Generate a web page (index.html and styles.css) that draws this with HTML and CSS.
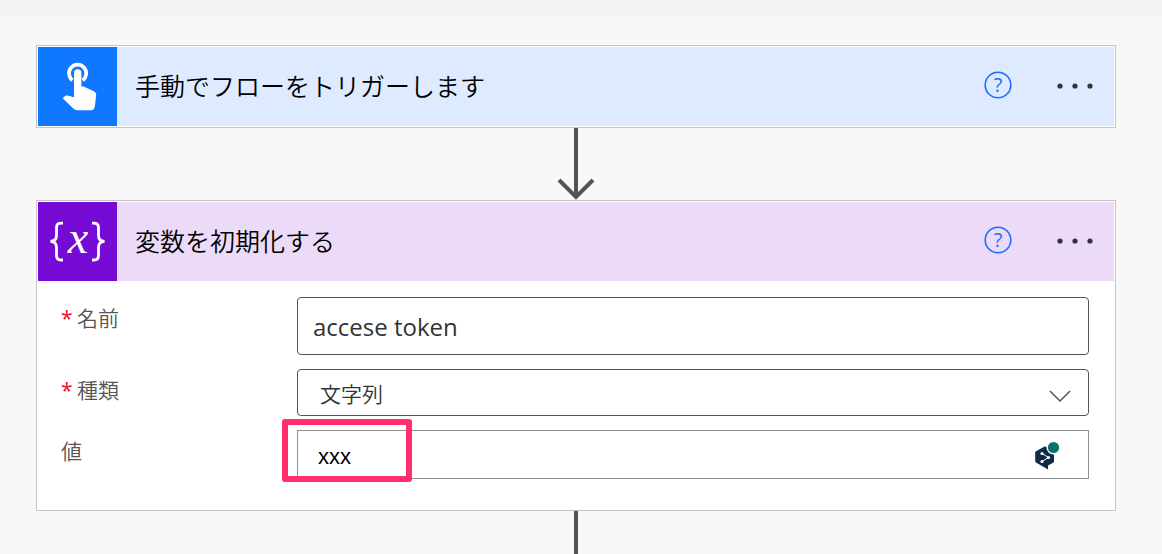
FILE: index.html
```html
<!DOCTYPE html>
<html lang="ja">
<head>
<meta charset="utf-8">
<meta name="viewport" content="width=device-width, initial-scale=1">
<title>フロー</title>
<link rel="stylesheet" href="styles.css">
</head>
<body>
<div class="topbar"></div>
<main class="flow">
  <section class="card">
    <header class="card-header trigger">
      <span class="card-icon">
        <svg width="79" height="79" viewBox="0 0 79 79" aria-hidden="true">
          <path d="M34.500 33.200A8.600 8.600 0 1 1 44.700 33.200" fill="none" stroke="#fff" stroke-width="3.700"/>
          <path d="M36 26a3.700 3.700 0 0 1 7.400 0V39.500h2.300L56.300 44.500Q58.500 45.600 58.200 48L56.800 59.500Q56.300 63.200 52.800 63.200H39Q37 63.200 35.600 61.800L24.700 51.200L26.700 49.300Q27.700 48.300 29.300 48.600L36 50.200Z" fill="#fff"/>
        </svg>
      </span>
      <h2 class="card-title">手動でフローをトリガーします</h2>
      <button class="icon-button help" type="button" aria-label="ヘルプ">
        <svg width="28" height="28" viewBox="0 0 28 28"><circle cx="14" cy="14" r="12.800"/><text x="14" y="21">?</text></svg>
      </button>
      <button class="icon-button more" type="button" aria-label="メニュー">
        <svg width="36" height="8" viewBox="0 0 36 8"><circle cx="3" cy="4" r="2.600"/><circle cx="18" cy="4" r="2.600"/><circle cx="33" cy="4" r="2.600"/></svg>
      </button>
    </header>
  </section>

  <div class="connector">
    <svg width="40" height="72" viewBox="0 0 40 72" aria-hidden="true"><path d="M20 0V69M3 52L20 69L37 52"/></svg>
  </div>

  <section class="card">
    <header class="card-header variable">
      <span class="card-icon">
        <svg width="79" height="79" viewBox="0 0 79 79" aria-hidden="true">
          <path d="M25 21.200H23Q18.500 21.200 18.500 25.700V33.500Q18.500 39 12.500 39.400Q18.500 39.800 18.500 45.300V53.500Q18.500 58 23 58H25M54 21.200H56Q60.500 21.200 60.500 25.700V33.500Q60.500 39 66.500 39.400Q60.500 39.800 60.500 45.300V53.500Q60.500 58 56 58H54" fill="none" stroke="#fff" stroke-width="2.800"/>
          <text class="glyph-x" x="40" y="51">x</text>
        </svg>
      </span>
      <h2 class="card-title">変数を初期化する</h2>
      <button class="icon-button help" type="button" aria-label="ヘルプ">
        <svg width="28" height="28" viewBox="0 0 28 28"><circle cx="14" cy="14" r="12.800"/><text x="14" y="21">?</text></svg>
      </button>
      <button class="icon-button more" type="button" aria-label="メニュー">
        <svg width="36" height="8" viewBox="0 0 36 8"><circle cx="3" cy="4" r="2.600"/><circle cx="18" cy="4" r="2.600"/><circle cx="33" cy="4" r="2.600"/></svg>
      </button>
    </header>
    <form class="fields">
      <div class="field">
        <label class="label" for="name"><span class="required">*</span>名前</label>
        <div class="control"><input class="box name" id="name" type="text" value="accese token"></div>
      </div>
      <div class="field">
        <label class="label" for="type"><span class="required">*</span>種類</label>
        <div class="control">
          <select class="box type" id="type"><option>文字列</option></select>
          <svg class="chevron" width="22" height="12" viewBox="0 0 22 12" aria-hidden="true"><path d="M1 1L11 11L21 1"/></svg>
        </div>
      </div>
      <div class="field">
        <label class="label" for="value">値</label>
        <div class="control">
          <input class="box value" id="value" type="text" value="xxx">
          <svg class="badge" width="26" height="30" viewBox="0 0 26 30" aria-hidden="true">
            <path d="M10.500 5.500Q11 5.300 11.500 5.500L19.500 10Q20 10.400 20 11V20.500Q20 21.200 19.500 21.500L14 24.500V28.500L2 21.500Q1.200 21 1.200 20.300V11.300Q1.200 10.600 2 10.200Z" fill="#0f2b46"/>
            <path d="M8 12.500L14.500 16.500L8 20.500" fill="none" stroke="#fff" stroke-width="1"/>
            <circle cx="8" cy="12.500" r="1.600" fill="#fff"/><circle cx="14.500" cy="16.500" r="1.600" fill="#fff"/><circle cx="8" cy="20.500" r="1.600" fill="#fff"/>
            <circle cx="19.500" cy="6.500" r="7" fill="#fff"/>
            <circle cx="19.500" cy="6.500" r="5.600" fill="#04736f"/>
          </svg>
          <span class="highlight"></span>
        </div>
      </div>
    </form>
  </section>

  <div class="connector tail"></div>
</main>
</body>
</html>
```
FILE: styles.css
```css
* {
  box-sizing: border-box;
}

body {
  margin: 0;
  min-height: 100vh;
  display: flex;
  flex-direction: column;
  background: #f8f8f8;
  font-family: "Noto Sans", "Noto Sans CJK JP", sans-serif;
  color: #000;
}

.topbar {
  height: 16px;
  background: #f3f3f3;
}

.flow {
  flex: 1;
  display: flex;
  flex-direction: column;
  padding: 29px 46px 0 36px;
}

.card {
  background: #fff;
  border: 1px solid #c4c4c4;
  padding: 1px;
}

.card-header {
  display: flex;
  align-items: center;
  padding-right: 21px;
}

.trigger {
  background: #deeaff;
}

.variable {
  background: #ebdbf8;
}

.card-icon {
  display: flex;
  margin-right: 18px;
}

.trigger .card-icon {
  background: #1077ff;
}

.variable .card-icon {
  background: #770bd6;
}

.glyph-x {
  font: italic 46px "Liberation Serif", serif;
  fill: #fff;
  text-anchor: middle;
}

.card-title {
  flex: 1;
  margin: 0;
  padding-bottom: 4px;
  font-family: "Noto Sans CJK JP", sans-serif;
  font-size: 25px;
  font-weight: 350;
  line-height: 36px;
}

.icon-button {
  display: flex;
  padding: 0;
  border: 0;
  background: none;
}

.help {
  margin: 0 45px 4px 0;
}

.help svg {
  overflow: visible;
}

.help circle {
  fill: none;
  stroke: #1a6dff;
  stroke-width: 1.600;
}

.help text {
  font: 20px "Open Sans", sans-serif;
  fill: #1a6dff;
  text-anchor: middle;
}

.more {
  margin-bottom: 2px;
  fill: #333;
}

.connector {
  display: flex;
  justify-content: center;
}

.connector path {
  fill: none;
  stroke: #545454;
  stroke-width: 4;
}

.tail {
  flex: 1;
}

.tail::before {
  content: "";
  width: 4px;
  background: #545454;
}

.fields {
  display: flex;
  flex-direction: column;
  gap: 14px;
  padding: 16px 25px 30px 23px;
}

.field {
  display: flex;
}

.label {
  width: 236px;
  padding-top: 4px;
  font-family: "Noto Sans CJK JP", sans-serif;
  font-size: 21px;
  font-weight: 350;
  line-height: 32px;
  color: #555;
}

.required {
  display: inline-block;
  width: 16px;
  font-family: "Open Sans", sans-serif;
  font-weight: 400;
  color: #e81123;
}

.control {
  position: relative;
  flex: 1;
  display: flex;
}

.box {
  flex: 1;
  min-width: 0;
  margin: 0;
  border: 1px solid #555;
  border-radius: 4px;
  background: #fff;
  color: #333;
  appearance: none;
}

.name {
  height: 58px;
  padding: 0 15px;
  font: 24px "Open Sans", sans-serif;
}

.type {
  height: 47px;
  padding: 0 22px;
  font: 350 21px "Noto Sans CJK JP", sans-serif;
}

.value {
  height: 49px;
  padding: 4px 20px 0;
  border-color: #919191;
  border-radius: 0;
  font: 22px "Liberation Sans", sans-serif;
  color: #000;
}

.chevron {
  position: absolute;
  right: 18px;
  top: 21px;
  fill: none;
  stroke: #555;
  stroke-width: 1.500;
  pointer-events: none;
}

.badge {
  position: absolute;
  right: 29px;
  top: 11px;
}

.highlight {
  position: absolute;
  left: -15px;
  top: -11px;
  width: 130px;
  height: 63px;
  border: 6px solid #ff2e6d;
  border-radius: 3px;
  pointer-events: none;
}
```
